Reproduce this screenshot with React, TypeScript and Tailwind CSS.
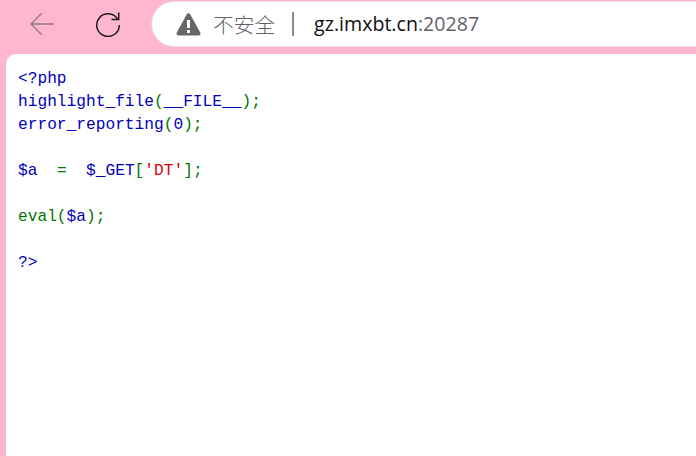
const blue = "text-[#0000bb]";
const green = "text-[#007700]";
const red = "text-[#dd0000]";

const lines = [
  [["<?php", blue]],
  [["highlight_file", blue], ["(", green], ["__FILE__", blue], [");", green]],
  [["error_reporting", blue], ["(", green], ["0", blue], [");", green]],
  [],
  [["$a", blue], ["\u00a0\u00a0", blue], ["=", green], ["\u00a0\u00a0", blue], ["$_GET", blue], ["[", green], ["'DT'", red], ["];", green]],
  [],
  [["eval", green], ["(", green], ["$a", blue], [");", green]],
  [],
  [["?>", blue]],
];

export default function App() {
  return (
    <div className="flex h-[456px] w-[696px] flex-col overflow-hidden bg-[#ffb6ce]">
      <div className="flex h-[54px] shrink-0 items-start">
        <div className="flex h-[48px] w-[151px] shrink-0 items-center">
          <svg className="ml-[30px]" width="24" height="22" viewBox="0 0 24 22" fill="none" stroke="#8f7a85" strokeWidth="1.3">
            <path d="M1 11H24M11.5 .5 1 11 11.5 21.5" />
          </svg>
          <svg className="ml-[41px] mt-[-1px]" width="26" height="26" viewBox="0 0 26 26" fill="none" stroke="#1a1a1a" strokeWidth="1.5">
            <path d="M22.5 8A11.3 11.3 0 1 0 24.3 14" />
            <path d="M23.7 1.5V8.5H16.5" />
          </svg>
        </div>
        <div className="mt-px flex h-[46px] w-[580px] shrink-0 items-center rounded-l-[23px] border border-[#dedede] bg-white pl-[24px]">
          <svg width="25" height="23" viewBox="0 0 25 23">
            <path fillRule="evenodd" fill="#666666" d="M10.8 1.2a2 2 0 0 1 3.4 0l10 18.4a2 2 0 0 1-1.7 3H2.5a2 2 0 0 1-1.7-3ZM11 7v8h3V7Zm0 10v3h3v-3Z" />
          </svg>
          <span className="ml-[12px] font-['Noto_Sans_CJK_SC',sans-serif] text-[20.7px] font-light leading-none text-[#5f6368]">不安全</span>
          <span className="ml-[17px] h-[24px] w-[2px] bg-[#8c8c8c]"></span>
          <span className="ml-[20px] font-['Open_Sans',sans-serif] text-[19.6px] leading-none text-[#111111]">
            gz.imxbt.cn<span className="text-[#5f6368]">:20287</span>
          </span>
        </div>
      </div>
      <div className="ml-[6px] flex-1 rounded-tl-[10px] bg-white pl-[12px] pt-[14px] font-['Liberation_Mono',monospace] text-[16.2px] leading-[23px]">
        {lines.map((line, i) => (
          <div key={i} className="h-[23px] whitespace-pre">
            {line.map(([text, color], j) => (
              <span key={j} className={color}>{text}</span>
            ))}
          </div>
        ))}
      </div>
    </div>
  );
}
